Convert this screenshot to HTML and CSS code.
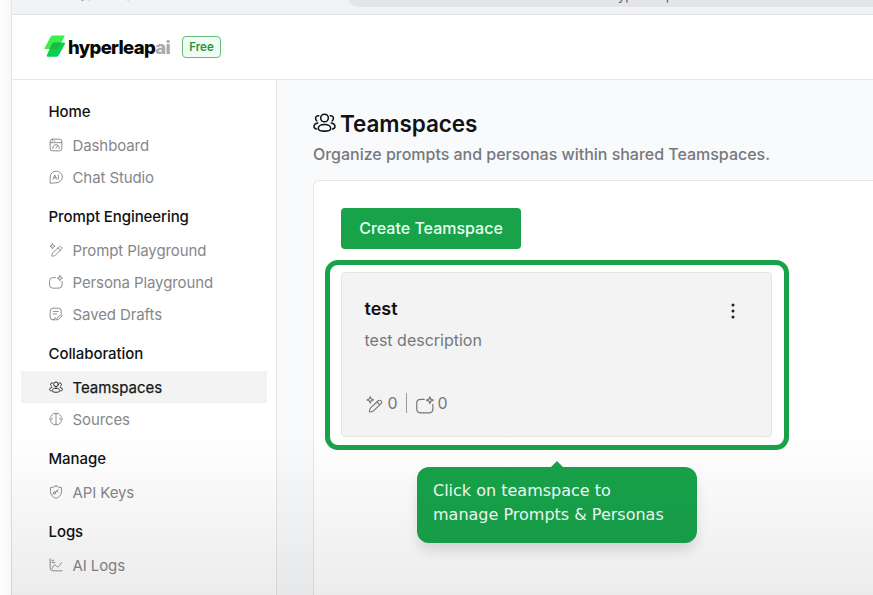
FILE: index.html
```html
<!DOCTYPE html>
<html lang="en">
<head>
<meta charset="utf-8">
<title>Teamspaces</title>
<link rel="stylesheet" href="styles.css">
</head>
<body>
<svg class="defs" aria-hidden="true">
  <symbol id="users" viewBox="0 0 24 24"><circle cx="12" cy="7.3" r="4"/><path d="M12 14c-4 0-6.5 2-6.5 4.2 0 1.800 2.500 2.800 6.500 2.800s6.500-1 6.500-2.800C18.500 16 16 14 12 14ZM6 5C3.800 4.800 2.500 6.200 2.700 8c.1 1 .6 1.800 1.300 2.300M18 5c2.200-.2 3.500 1.200 3.300 3-.1 1-.6 1.800-1.300 2.300M5 12.500c-2.500.5-4 2-4 3.700 0 1.300 1 2.200 2.500 2.600M19 12.500c2.500.5 4 2 4 3.700 0 1.300-1 2.200-2.500 2.600"/></symbol>
  <symbol id="pen" viewBox="0 0 24 24"><path d="m6 1 1.500 3.300L10.500 5.500 7.500 6.800 6 10 4.500 6.800 1.500 5.500 4.500 4.300ZM17.300 6.700c2.700-2 6.200 1 4.200 3.800L11 20.700c-1.500 1.500-3.700 2-6 1.800-.3-2.300.3-4.500 1.800-6ZM15.500 8.500l4 4"/></symbol>
  <symbol id="persona" viewBox="0 0 24 24"><path d="M11 4.500H6.500q-5.500 0-5.500 5V17q0 5.500 5.500 5.500h10.500q5.500 0 5.500-5.500v-6M18.500 1l1.300 3.200L23 5.500l-3.200 1.300L18.500 10l-1.300-3.200L14 5.500l3.200-1.300Z"/></symbol>
</svg>
<div class="screen">
  <div class="browser">
    <span class="tab">hyperleap</span>
    <div class="address">hyperleap.ai</div>
  </div>
  <header class="topbar">
    <svg class="mark" viewBox="0 0 22 24"><path d="M8.500 1.500h11q1.800 0 .8 1.500l-5.800 10.500q-.8 1.500-2.500 1.500H1.500q-1.600 0-.6-1.600L6.500 3q.7-1.500 2-1.500Z" fill="#3af04a"/><path d="M10 8.500h10q1.800 0 .9 1.500l-6 11q-.8 1.700-2.700 1.700H3.700q-1.700 0-.8-1.600L8 10q.6-1.500 2-1.500Z" fill="#07cf52"/><path d="M10 8.500h7.300l-2.800 5q-.8 1.500-2.500 1.500H5.400L8 10q.6-1.500 2-1.500Z" fill="#20b83e"/></svg>
    <span class="brand">hyperleap<i>ai</i></span>
    <span class="plan">Free</span>
  </header>
  <div class="body">
    <nav class="side">
      <h3>Home</h3>
      <a><svg viewBox="0 0 24 24"><rect x="2" y="2" width="20" height="20" rx="4"/><path d="M2 8h20M5.500 5h1M9 5h1M6.500 18c-1-9 12-9 11 0M12 17l2.500-3.500"/></svg>Dashboard</a>
      <a><svg viewBox="0 0 24 24"><path d="M2 22V12A10.500 10 0 1 1 12.500 22ZM7 15.500l3-7 3 7M8 13.500h4M16 8.500v7"/></svg>Chat Studio</a>
      <h3>Prompt Engineering</h3>
      <a><svg><use href="#pen"/></svg>Prompt Playground</a>
      <a><svg><use href="#persona"/></svg>Persona Playground</a>
      <a><svg viewBox="0 0 24 24"><path d="M11 22H7q-5 0-5-5V7q0-5 5-5h9q5 0 5 5v4M7 7.500h9M7 12h6M20 13.500c1.200-1.200 3 .5 2 2l-6 6-3 .7.700-3ZM7 22q4 0 4-4"/></svg>Saved Drafts</a>
      <h3>Collaboration</h3>
      <a class="active"><svg><use href="#users"/></svg>Teamspaces</a>
      <a><svg viewBox="0 0 24 24"><path d="M12 2v20M12 3c-3-2-5.500-.5-6 2-2.500.5-3.500 2.500-3 4.500-2 1.500-2 4 0 5.500-.3 2.500 1 4 3 4.500 1 2.500 4 3 6 1.500M12 3c3-2 5.500-.5 6 2 2.500.5 3.500 2.500 3 4.500 2 1.500 2 4 0 5.500.3 2.500-1 4-3 4.500-1 2.500-4 3-6 1.500M3 12h3M18 12h3"/></svg>Sources</a>
      <h3>Manage</h3>
      <a><svg viewBox="0 0 24 24"><path d="M12 1.500c3 2 6 2.500 9.500 3v7c0 5.500-4 9-9.500 11.500C6.500 20.500 2.500 17 2.500 11.500v-7c3.500-.5 6.500-1 9.500-3Z"/><circle cx="9.500" cy="13.500" r="2"/><path d="m11 12 5-4M13.500 10l1.500 2M7 15l2-1"/></svg>API Keys</a>
      <h3>Logs</h3>
      <a><svg viewBox="0 0 24 24"><path d="M2 1.500V17q0 5 5 5h15.500M5.500 18c3-8 5-7 7-4 2.500 3 5 0 9-6M5 4h3M5 7.500h5"/></svg>AI Logs</a>
    </nav>
    <main class="main">
      <h1><svg><use href="#users"/></svg><span>Teamspaces</span></h1>
      <p class="lead">Organize prompts and personas within shared Teamspaces.</p>
      <section class="panel">
        <button class="create">Create Teamspace</button>
        <div class="spot">
          <article class="card">
            <div class="cardhead"><h2>test</h2><svg class="dots" viewBox="0 0 4 16"><circle cx="2" cy="2" r="1.500"/><circle cx="2" cy="8" r="1.500"/><circle cx="2" cy="14" r="1.500"/></svg></div>
            <p>test description</p>
            <div class="stats"><svg class="s1"><use href="#pen"/></svg><span>0</span><i></i><svg class="s2"><use href="#persona"/></svg><span>0</span></div>
          </article>
          <div class="tip">Click on teamspace to<br>manage Prompts &amp; Personas</div>
        </div>
      </section>
    </main>
  </div>
</div>
<div class="fade"></div>
</body>
</html>
```
FILE: styles.css
```css
* { box-sizing: border-box; }
body { margin: 0; width: 873px; height: 595px; overflow: hidden; font-family: Inter, sans-serif; color: #111214; background: linear-gradient(90deg, #fff, #f7f7f7 11px); }
h1, h2, h3, p { margin: 0; }
svg { fill: none; stroke: currentColor; stroke-width: 1.6; stroke-linecap: round; stroke-linejoin: round; flex: none; }
.defs { position: absolute; width: 0; height: 0; }
.screen { height: 595px; margin-left: 11px; border-left: 1px solid #e3e4e5; display: flex; flex-direction: column; background: #fff; }
.browser { height: 15px; flex: none; display: flex; align-items: flex-start; background: #f2f3f5; border-bottom: 1px solid #e0e1e4; overflow: hidden; color: #596070; }
.tab { width: 335px; padding-left: 61px; font-size: 13px; line-height: 16px; margin-top: -15px; color: #999; }
.address { flex: 1; height: 27px; margin-top: -20px; border-radius: 12px 0 0 12px; background: #e4e5e9; padding-left: 263px; font-size: 13.5px; line-height: 30px; }
.topbar { height: 65px; flex: none; display: flex; align-items: flex-start; border-bottom: 1px solid #e6e7e9; }
.mark { width: 22px; height: 24px; margin: 19px 0 0 32px; stroke: none; }
.brand { width: 105px; margin: 20px 0 0 2px; font-size: 18.5px; line-height: 25px; font-weight: 800; letter-spacing: -.66px; color: #080808; white-space: nowrap; }
.brand i { font-style: normal; color: #aaa; }
.plan { margin: 21px 0 0 9px; width: 39px; height: 22px; border: 1px solid #62bd7b; border-radius: 4px; background: #effdf4; color: #24963f; font-size: 11.5px; line-height: 20px; font-weight: 600; text-align: center; }
.body { flex: 1; display: flex; min-height: 0; }
.side { width: 265px; flex: none; padding: 13px 9px 0; border-right: 1px solid #e6e7e9; }
.side h3 { height: 36px; line-height: 37px; padding-left: 27.500px; font-size: 15px; font-weight: 500; letter-spacing: -.08px; }
.side a + h3 { margin-top: 5px; }
.side a { display: flex; align-items: center; height: 32px; padding-left: 28px; color: #85878a; font-size: 15px; letter-spacing: -.1px; }
.side a svg { width: 14px; height: 14px; margin-right: 9.500px; }
.side .active { background: #f3f3f3; color: #18191b; letter-spacing: -.03px; -webkit-text-stroke: .25px; }
.main { flex: 1; min-width: 0; padding: 26px 0 0 36px; background: #f9fafc; display: flex; flex-direction: column; }
h1 { display: flex; align-items: center; height: 34px; font-size: 22.500px; font-weight: 600; letter-spacing: -.08px; }
h1 svg { width: 23px; height: 23px; margin: -2px 4px 0 0; }
.lead { height: 40px; line-height: 28px; font-size: 16px; font-weight: 500; color: #76787d; white-space: nowrap; letter-spacing: -.02px; }
.panel { flex: 1; margin-right: -12px; padding: 27px 0 0 27px; background: #fff; border: 1px solid #e5e7e9; border-bottom: 0; border-radius: 6px 0 0 0; }
.create { display: block; width: 180px; height: 41px; border: 0; border-radius: 4px; background: #18a34a; color: #e8fff0; font: 500 16px Inter, sans-serif; padding: 0 0 2px; }
.spot { position: relative; width: 464px; height: 190px; margin: 11px 0 0 -16px; padding: 7px 11px; border: 5px solid #18a34a; border-radius: 13px; }
.card { width: 431px; height: 165px; border: 1px solid #e5e5e5; border-radius: 4px; background: #f3f3f3; padding: 23px 22px 0 22.500px; display: flex; flex-direction: column; }
.cardhead { display: flex; justify-content: space-between; height: 27px; padding-right: 14.500px; }
h2 { font-size: 18px; line-height: 25px; font-weight: 600; }
.dots { width: 4px; height: 16px; margin-top: 7px; fill: #222; stroke: none; }
.card p { font-size: 16px; line-height: 34px; color: #75777b; }
.stats { display: flex; align-items: center; margin-top: 35px; height: 22px; font-size: 16px; color: #75777b; }
.stats svg { width: 17px; height: 17px; margin: 3px 5px 0 1px; }
.stats i { width: 1px; height: 20px; margin: 0 8px 0 8px; background: #999; }
.stats .s2 { width: 18px; height: 18px; margin-right: 4px; }
.tip { position: absolute; left: 87px; top: 202px; width: 280px; height: 76px; padding: 12px 16px; border-radius: 12px; background: #18a34a; color: #f1fff6; font: 16px/24px "DejaVu Sans", sans-serif; white-space: nowrap; box-shadow: 0 9px 14px -2px rgba(0,0,0,.14); }
.tip::before { content: ""; position: absolute; left: 134px; top: -6px; border: 6px solid transparent; border-top: 0; border-bottom-color: #18a34a; }
.fade { position: absolute; left: 11px; right: 0; bottom: 0; height: 165px; background: linear-gradient(rgba(0,0,0,0), rgba(0,0,0,.075)); pointer-events: none; }
```
